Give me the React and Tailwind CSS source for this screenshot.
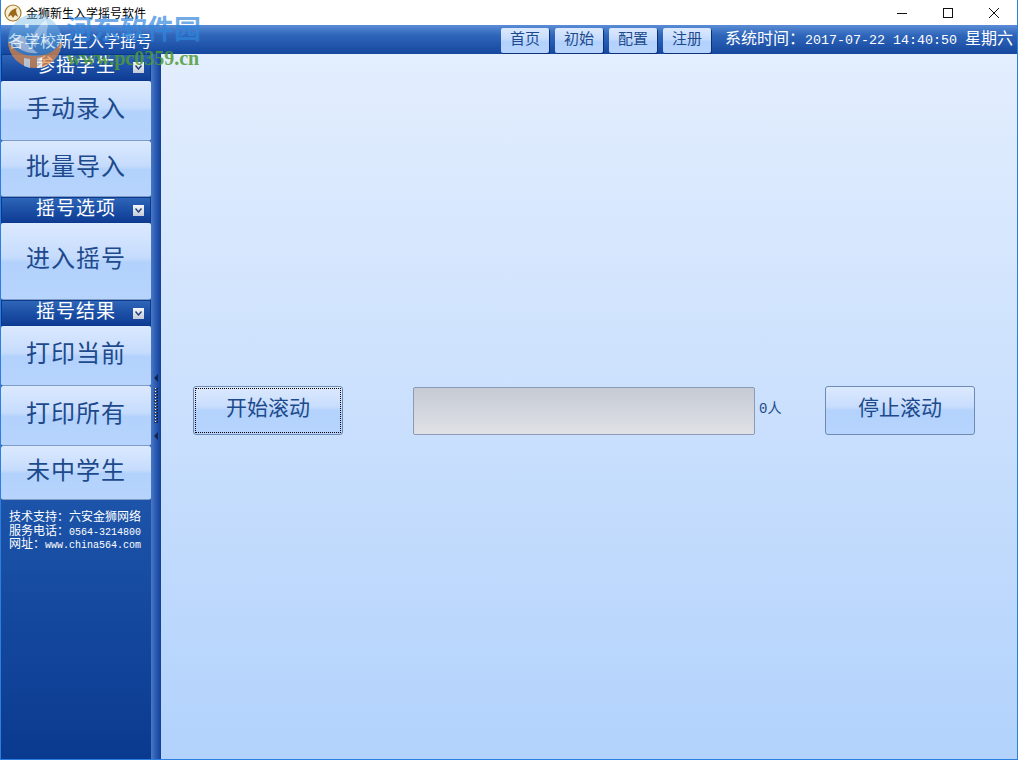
import React from "react";

const cjk = "font-['Liberation_Mono','Noto_Sans_CJK_SC',monospace]";

// sidebar section header
const SectionHeader = ({ title, height = "h-[26px]" }) => (
  <div className={`${height} relative flex items-center justify-center border border-[#0b3a8c] bg-gradient-to-b from-[#2f66b8] via-[#1c4fa6] to-[#0f3c94]`}>
    <span className={`${cjk} text-[19px] leading-none tracking-[1px] text-white`}>{title}</span>
    <span className="absolute right-[6px] top-[7px] flex h-[11px] w-[11px] items-center justify-center bg-gradient-to-b from-[#f4f6fa] to-[#c4cbd8]">
      <svg width="7" height="5" viewBox="0 0 7 5">
        <path d="M0.5 0.5 L3.5 4 L6.5 0.5" fill="none" stroke="#1f3f7a" strokeWidth="1.4" />
      </svg>
    </span>
  </div>
);

// big gradient sidebar button
const SideButton = ({ label, height }) => (
  <div
    className={`${height} flex items-center justify-center rounded-[2px] border-b border-[#7f9cc8] bg-[linear-gradient(#dbe9fe_0%,#c6dcfd_45%,#b2d1fc_52%,#b6d4fd_100%)]`}
  >
    <span className={`${cjk} text-[24px] leading-none tracking-[1px] text-[#1d4a8c]`}>{label}</span>
  </div>
);

const NavButton = ({ label }) => (
  <div className="flex h-[25px] w-[48px] items-center justify-center rounded-[2px] bg-[linear-gradient(#dbe9fe_0%,#c6dcfd_45%,#b2d1fc_55%,#b6d4fd_100%)] shadow-[1px_1px_0_#0d2f78]">
    <span className={`${cjk} text-[15px] leading-none text-[#1d4a8c]`}>{label}</span>
  </div>
);

const ScrollButton = ({ label, focused }) => (
  <div className="flex h-[49px] w-[150px] items-center justify-center rounded-[3px] border border-[#6f8bb3] bg-[linear-gradient(#dce9fe_0%,#c8ddfd_42%,#b3d2fc_50%,#b6d4fd_100%)] p-[1px]">
    <div
      className={`flex h-full w-full items-center justify-center pb-[3px] ${focused ? "border border-dotted border-black" : ""}`}
    >
      <span className={`${cjk} text-[21px] leading-none text-[#1d4a8c]`}>{label}</span>
    </div>
  </div>
);

const App = () => {
  return (
    <div className="relative flex h-[760px] w-[1018px] flex-col overflow-hidden border-x border-[#2b7fe0] bg-white">
      {/* Title bar */}
      <div className="flex h-[25px] shrink-0 items-center bg-white pl-[3px]">
        <svg width="18" height="18" viewBox="0 0 18 18" className="mr-[4px]">
          <circle cx="9" cy="9" r="8" fill="#f7eed6" stroke="#a67c2c" strokeWidth="1.2" />
          <path d="M4 13 C5 8 8 5 13 4 C11 7 13 9 14 13 L11 11 L9 14 L7 11 Z" fill="#9a6a1c" />
        </svg>
        <span className="font-['Noto_Sans_CJK_SC',sans-serif] text-[12px] leading-none text-black">金狮新生入学摇号软件</span>
        <div className="ml-auto flex items-center">
          <svg width="46" height="16" viewBox="0 0 46 16">
            <path d="M18 8.5 H28" stroke="#111" strokeWidth="1" />
          </svg>
          <svg width="46" height="16" viewBox="0 0 46 16">
            <rect x="18.5" y="3.5" width="9" height="9" fill="none" stroke="#111" strokeWidth="1" />
          </svg>
          <svg width="46" height="16" viewBox="0 0 46 16">
            <path d="M18 3 L28 13 M28 3 L18 13" stroke="#111" strokeWidth="1" />
          </svg>
        </div>
      </div>

      {/* Header bar */}
      <div className="flex h-[29px] shrink-0 items-center bg-[linear-gradient(#5a8dd6_0%,#2f66ba_35%,#14479e_100%)] pl-[7px]">
        <span className="font-['Noto_Sans_CJK_SC',sans-serif] text-[16px] leading-none text-white">各学校新生入学摇号</span>
        <div className="ml-auto flex items-center gap-[6px] pt-[1px]">
          <NavButton label="首页" />
          <NavButton label="初始" />
          <NavButton label="配置" />
          <NavButton label="注册" />
        </div>
        <span className={`${cjk} ml-[14px] mr-[4px] whitespace-nowrap text-[16px] leading-none text-white`}>
          系统时间：<span className="text-[13.33px]">2017-07-22 14:40:50 </span>星期六
        </span>
      </div>

      <div className="flex min-h-0 flex-1 border-b border-[#2b7fe0]">
        {/* Sidebar */}
        <div className="flex w-[150px] shrink-0 flex-col bg-[linear-gradient(#1b52a8_0%,#0a3a90_100%)]">
          <SectionHeader title="参摇学生" height="h-[27px]" />
          <SideButton label="手动录入" height="h-[60px]" />
          <SideButton label="批量导入" height="h-[56px]" />
          <SectionHeader title="摇号选项" />
          <SideButton label="进入摇号" height="h-[77px]" />
          <SectionHeader title="摇号结果" />
          <SideButton label="打印当前" height="h-[60px]" />
          <SideButton label="打印所有" height="h-[60px]" />
          <SideButton label="未中学生" height="h-[54px]" />
          <div className="flex flex-1 flex-col bg-[linear-gradient(#1c54aa_0%,#0a3a90_100%)] pl-[8px] pt-[12px] leading-[13.5px] text-white">
            <span className={`${cjk} whitespace-nowrap text-[12px]`}>技术支持：六安金狮网络</span>
            <span className={`${cjk} whitespace-nowrap text-[12px]`}>
              服务电话：<span className="text-[10px]">0564-3214800</span>
            </span>
            <span className={`${cjk} whitespace-nowrap text-[12px]`}>
              网址：<span className="text-[10px]">www.china564.com</span>
            </span>
          </div>
        </div>

        {/* Splitter */}
        <div className="flex w-[10px] shrink-0 flex-col items-center justify-center bg-[linear-gradient(90deg,#4a78c6_0%,#2f60b4_40%,#123f9a_100%)]">
          <svg width="6" height="70" viewBox="0 0 6 70">
            <path d="M1 6 L5 2 V10 Z" fill="#10254f" />
            <path d="M3 16 V51" stroke="#0a1430" strokeWidth="4" strokeDasharray="1.5 1.5" />
            <path d="M2.5 16 V51" stroke="#f2f5fc" strokeWidth="1.5" strokeDasharray="1 2" />
            <path d="M1 64 L5 60 V68 Z" fill="#10254f" />
          </svg>
        </div>

        {/* Main panel */}
        <div className="flex min-w-0 flex-1 items-center bg-[linear-gradient(#e3eefe_0%,#b2d2fc_100%)] pl-[32px] pt-[8px]">
          <ScrollButton label="开始滚动" focused />
          <div className="ml-[70px] h-[48px] w-[342px] rounded-[2px] border border-[#8b9bb3] bg-[linear-gradient(#c6cad4_0%,#dfe1e6_100%)]" />
          <span className={`${cjk} ml-[4px] w-[66px] pb-[3px] text-[14px] leading-none text-[#1d4a8c]`}>0人</span>
          <ScrollButton label="停止滚动" />
        </div>
      </div>

      {/* Site watermark over the corner */}
      <div className="pointer-events-none absolute left-[5px] top-[12px] opacity-70">
        <svg width="58" height="58" viewBox="0 0 58 58">
          <circle cx="29" cy="29" r="27" fill="#6fb5e6" fillOpacity="0.6" />
          <path d="M2 29 A27 27 0 0 0 56 29 C50 40 40 44 28 44 C16 44 7 38 2 29 Z" fill="#e8893f" />
          <path d="M6 30 C12 38 22 42 32 41 C24 36 20 30 18 24 C12 24 8 26 6 30 Z" fill="#e4e8f0" fillOpacity="0.8" />
          <path d="M18 46 L24 47 L24 56 L18 54 Z M31 46 L36 45 L36 56 L31 56 Z" fill="#f7efe4" />
          <path d="M24 30 C28 20 34 12 40 8 L42 14 C40 20 40 26 44 34 L36 30 L38 20 C34 24 30 30 30 36 Z" fill="#ffffff" fillOpacity="0.5" />
          <circle cx="21" cy="14" r="2" fill="#ffffff" />
        </svg>
      </div>
      <span className="pointer-events-none absolute left-[65px] top-[14px] whitespace-nowrap font-['Noto_Sans_CJK_SC',sans-serif] text-[27px] font-bold leading-none text-[#2f86de]/70">
        河东软件园
      </span>
      <span className="pointer-events-none absolute left-[66px] top-[48px] whitespace-nowrap font-['Liberation_Serif',serif] text-[20px] font-bold leading-none text-[#4f9a35]/85">
        www.pc0359.cn
      </span>
    </div>
  );
};

export default App;
